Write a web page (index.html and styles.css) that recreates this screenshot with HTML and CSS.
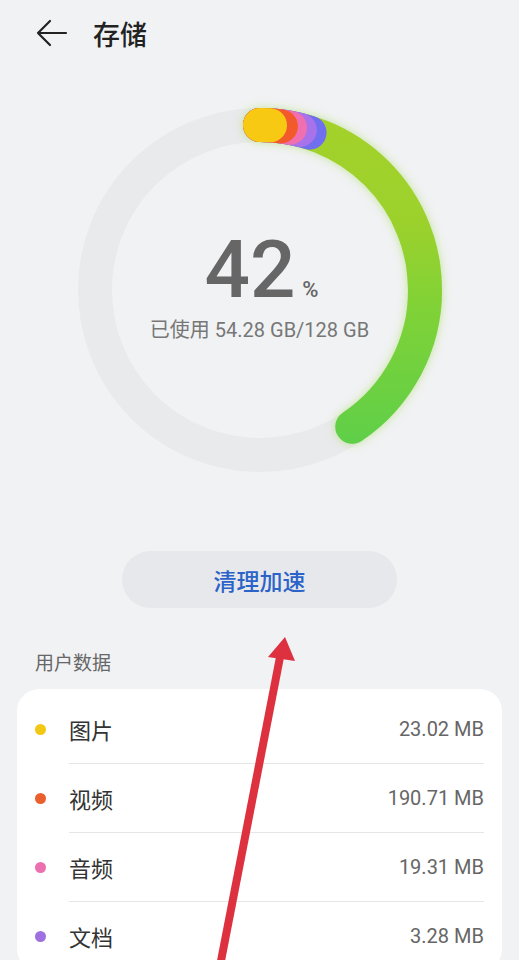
FILE: index.html
```html
<!DOCTYPE html>
<html lang="zh-CN">
  <head>
    <meta charset="UTF-8" />
    <meta name="viewport" content="width=device-width, initial-scale=1.0" />
    <title>存储</title>
    <link rel="stylesheet" href="styles.css">
  </head>
  <body>
    <div class="screen">
      <header class="topbar">
        <svg class="back" width="32" height="28" viewBox="0 0 32 28">
          <path d="M2 14 H30 M14 2 L2 14 L14 26" fill="none" stroke="#222" stroke-width="2.2" stroke-linecap="round" stroke-linejoin="round" />
        </svg>
        <h1>存储</h1>
      </header>

      <section class="usage">
        <svg class="ring" width="380" height="380" viewBox="0 0 380 380">
          <defs>
            <!-- coords are in the rotated space: high x = top of the page -->
            <linearGradient id="green" x1="360" y1="190" x2="20" y2="190" gradientUnits="userSpaceOnUse">
              <stop offset="0" stop-color="#a3d22a" />
              <stop offset="0.3" stop-color="#9cd12c" />
              <stop offset="0.55" stop-color="#80d236" />
              <stop offset="1" stop-color="#5bcf4b" />
            </linearGradient>
          </defs>
          <circle class="track" cx="190" cy="190" r="165" />
          <g transform="rotate(-90 190 190)">
            <circle class="seg seg-green" cx="190" cy="190" r="165" pathLength="360" stroke="url(#green)" stroke-dasharray="146 400" />
            <circle class="seg" cx="190" cy="190" r="165" pathLength="360" stroke="#6f6ff0" stroke-dasharray="17.5 400" />
            <circle class="seg" cx="190" cy="190" r="165" pathLength="360" stroke="#a872ea" stroke-dasharray="14 400" />
            <circle class="seg" cx="190" cy="190" r="165" pathLength="360" stroke="#ef6fb0" stroke-dasharray="10.5 400" />
            <circle class="seg" cx="190" cy="190" r="165" pathLength="360" stroke="#f35a2b" stroke-dasharray="7.3 400" />
            <circle class="seg" cx="190" cy="190" r="165" pathLength="360" stroke="#f7c912" stroke-dasharray="3.5 400" />
          </g>
        </svg>
        <div class="usage-text">
          <div class="percent">42<span>%</span></div>
          <p>已使用 54.28 GB/128 GB</p>
        </div>
      </section>

      <button class="clean">清理加速</button>

      <h2 class="group-title">用户数据</h2>
      <ul class="data-list">
        <li class="row">
          <i class="dot dot-yellow"></i>
          <div class="row-body"><span class="name">图片</span><span class="size">23.02 MB</span></div>
        </li>
        <li class="row">
          <i class="dot dot-orange"></i>
          <div class="row-body"><span class="name">视频</span><span class="size">190.71 MB</span></div>
        </li>
        <li class="row">
          <i class="dot dot-pink"></i>
          <div class="row-body"><span class="name">音频</span><span class="size">19.31 MB</span></div>
        </li>
        <li class="row">
          <i class="dot dot-purple"></i>
          <div class="row-body"><span class="name">文档</span><span class="size">3.28 MB</span></div>
        </li>
      </ul>
    </div>

    <!-- red annotation arrow drawn over the page -->
    <svg class="annotation" width="519" height="960" viewBox="0 0 519 960">
      <line x1="220" y1="966" x2="281" y2="652" stroke="#dd3140" stroke-width="8" />
      <polygon points="285,637 268,657 295,661" fill="#dd3140" />
    </svg>
  </body>
</html>
```

FILE: styles.css
```css
* {
  margin: 0;
  padding: 0;
  box-sizing: border-box;
}

body {
  width: 519px;
  height: 960px;
  overflow: hidden;
  position: relative;
  background: #f1f2f4;
  font-family: Roboto, "Noto Sans CJK SC", sans-serif;
  color: #333;
}

.topbar {
  height: 66px;
  display: flex;
  align-items: center;
  gap: 25px;
  padding-left: 36px;
}

.back {
  display: block;
}

.topbar h1 {
  font-size: 27px;
  font-weight: 500;
  color: #222;
}

.usage {
  margin-top: 34px;
  display: grid;
  justify-items: center;
  align-items: center;
}

.ring,
.usage-text {
  grid-area: 1 / 1;
}

.ring {
  display: block;
  overflow: visible;
}

.track {
  fill: none;
  stroke: #e9eaec;
  stroke-width: 34;
}

.seg {
  fill: none;
  stroke-width: 34;
  stroke-linecap: round;
}

.seg-green {
  filter: drop-shadow(0 0 5px rgba(150, 215, 60, 0.5));
}

.usage-text {
  text-align: center;
  padding-bottom: 8px;
}

.percent {
  font-size: 80px;
  line-height: 80px;
  font-weight: 500;
  color: #666;
  padding-left: 4px;
}

.percent span {
  font-size: 22px;
  line-height: 1;
  margin-left: 7px;
}

.usage-text p {
  margin-top: 8px;
  font-size: 20px;
  line-height: 24px;
  color: #777;
}

.clean {
  display: block;
  width: 275px;
  height: 57px;
  margin: 71px auto 0;
  border: none;
  border-radius: 29px;
  background: #e7e8eb;
  color: #2b63c8;
  font-family: inherit;
  font-size: 23px;
  font-weight: 500;
}

.group-title {
  margin-top: 44px;
  padding-left: 35px;
  font-size: 19px;
  line-height: 24px;
  font-weight: 400;
  color: #666;
}

.data-list {
  list-style: none;
  margin: 13px 17px 0;
  padding-top: 6px;
  background: #fff;
  border-radius: 22px;
}

.row {
  height: 69px;
  display: flex;
  align-items: center;
  padding: 0 18px;
}

.dot {
  width: 11px;
  height: 11px;
  border-radius: 50%;
  margin-right: 23px;
  flex-shrink: 0;
}

.dot-yellow { background: #f3c814; }
.dot-orange { background: #eb5f2e; }
.dot-pink { background: #ec6faf; }
.dot-purple { background: #9e70e0; }

.row-body {
  flex: 1;
  height: 100%;
  display: flex;
  justify-content: space-between;
  align-items: center;
  border-bottom: 1px solid #e6e6e6;
}

.name {
  font-size: 22px;
  color: #333;
}

.size {
  font-size: 20px;
  color: #666;
}

.annotation {
  position: absolute;
  left: 0;
  top: 0;
  pointer-events: none;
}
```
